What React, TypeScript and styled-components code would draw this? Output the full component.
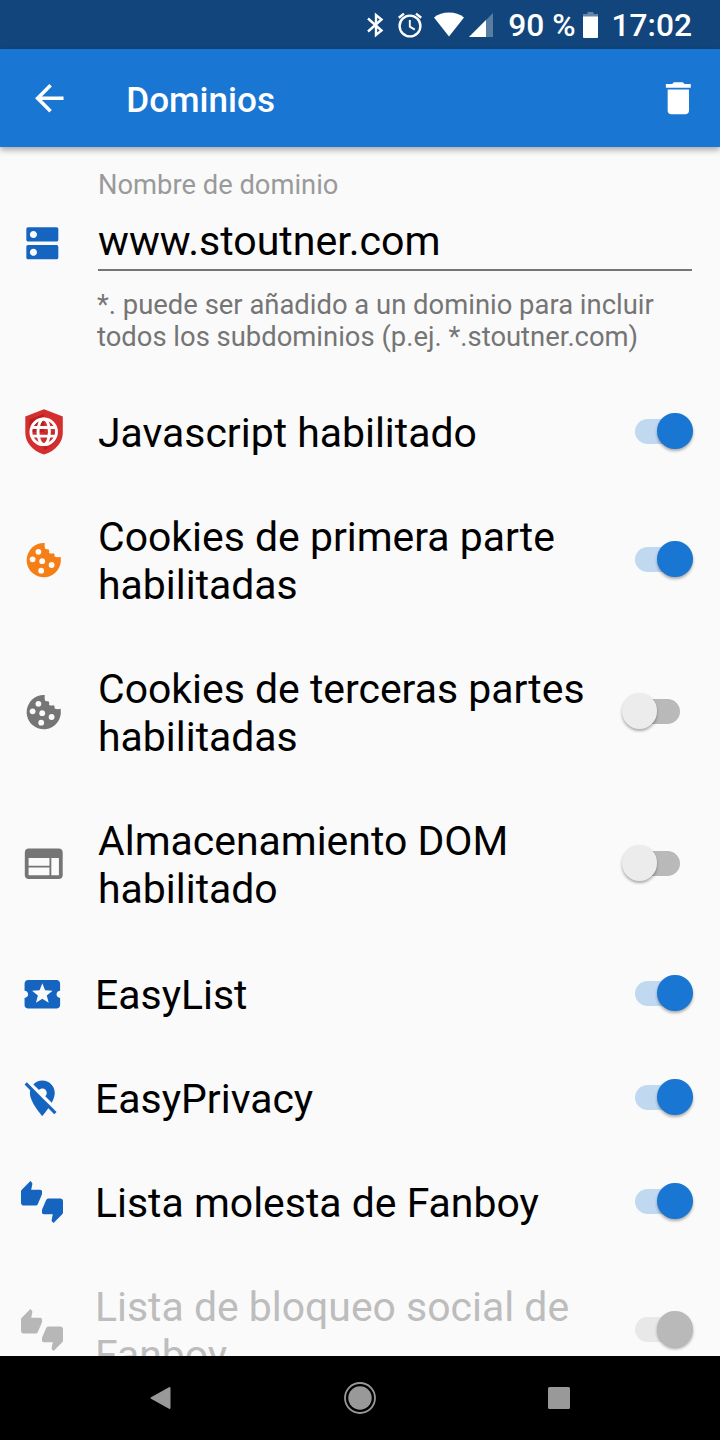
import React from "react";
import styled, { createGlobalStyle } from "styled-components";

const GlobalStyle = createGlobalStyle`
  *, *::before, *::after { box-sizing: border-box; }
  html, body { margin: 0; padding: 0; background: #fafafa; }
  body { font-family: Roboto, "Liberation Sans", sans-serif; overflow: hidden; }
`;

const Screen = styled.div`
  width: 720px;
  height: 1440px;
  display: flex;
  flex-direction: column;
  background: #fafafa;
  overflow: hidden;
`;

const StatusBar = styled.header`
  flex: none;
  height: 49px;
  background: #11457b;
  color: #fff;
  display: flex;
  justify-content: flex-end;
  align-items: center;
  padding-right: 28px;
`;

const StatusText = styled.span<{ $gap: number }>`
  font-size: 31.7px;
  font-weight: 500;
  line-height: 49px;
  white-space: nowrap;
  margin-left: ${(p) => p.$gap}px;
  padding-top: 2px;
`;

const StatusIcon = styled.svg<{ $gap?: number }>`
  display: block;
  flex: none;
  margin-left: ${(p) => p.$gap ?? 0}px;
`;

const AppBar = styled.div`
  flex: none;
  height: 98px;
  background: #1976d2;
  color: #fff;
  display: flex;
  align-items: center;
  padding: 0 20.5px 0 27.6px;
  z-index: 1;
  box-shadow: 0 3px 6px rgba(0, 0, 0, 0.33);
`;

const Title = styled.h1`
  flex: 1;
  margin: 4px 0 0 56px;
  font-size: 35.1px;
  font-weight: 500;
  line-height: 42px;
`;

const IconButton = styled.button`
  display: flex;
  padding: 0;
  border: 0;
  background: none;
  color: inherit;
`;

const Content = styled.main`
  flex: 1;
  min-height: 0;
  overflow: hidden;
`;

const DomainSection = styled.section`
  height: 233px;
  display: flex;
`;

const IconSlot = styled.div`
  flex: none;
  width: 87px;
  display: flex;
  justify-content: center;
  align-items: center;
  margin-right: 11px;
  svg { display: block; }
`;

const DomainIconSlot = styled(IconSlot)`
  width: 84px;
  height: 192px;
  margin-right: 14px;
`;

const DomainFields = styled.div`
  flex: 1;
  padding: 22px 28px 0 0;
`;

const FieldLabel = styled.div`
  font-size: 27.35px;
  line-height: 32px;
  color: #9a9a9a;
`;

const FieldValue = styled.div`
  height: 70px;
  padding-top: 16px;
  font-size: 41.1px;
  line-height: 48px;
  color: #000;
  border-bottom: 2px solid #757575;
`;

const Hint = styled.p`
  margin: 18px 0 0 -1px;
  font-size: 27.42px;
  line-height: 32px;
  color: #757575;
`;

const Group = styled.div`
  margin-bottom: 2px;
`;

const SettingRow = styled.div<{ $tall: boolean }>`
  height: ${(p) => (p.$tall ? 152 : 104)}px;
  display: flex;
  align-items: center;
  padding-right: 27px;
`;

const SettingLabel = styled.span<{ $disabled?: boolean }>`
  flex: 1;
  max-width: 510px;
  margin-top: 2px;
  font-size: 40.93px;
  line-height: 48px;
  color: ${(p) => (p.$disabled ? "#bdbdbd" : "#000")};
`;

const SwitchBox = styled.div`
  flex: none;
  height: 36px;
  margin: -2px 0 0 auto;
  padding-right: 13px;
  display: flex;
  align-items: center;
`;

const Track = styled.div<{ $on: boolean; $disabled?: boolean }>`
  flex: none;
  width: 45px;
  height: 25px;
  border-radius: 13px;
  background: ${(p) => (p.$disabled ? "#e8e8e8" : p.$on ? "#c0d8f0" : "#b9b9b9")};
  display: flex;
  align-items: center;
`;

const Thumb = styled.div<{ $on: boolean; $disabled?: boolean }>`
  flex: none;
  width: 35.6px;
  height: 35.6px;
  margin-left: ${(p) => (p.$on ? 22.4 : -13.4)}px;
  border-radius: 50%;
  background: ${(p) => (p.$disabled ? "#b9b9b9" : p.$on ? "#1976d2" : "#ececec")};
  box-shadow: 0 2px 3px rgba(0, 0, 0, 0.32);
`;

const NavBar = styled.footer`
  flex: none;
  height: 84px;
  background: #000;
  display: flex;
  align-items: center;
  justify-content: space-between;
  padding: 0 150px 0 150px;
`;

const BLUE = "#1565c0";

const Glyph = ({ d, size, color }: { d: string; size: number; color: string }) => (
  <svg width={size} height={size} viewBox="0 0 24 24" fill={color}>
    <path d={d} />
  </svg>
);

const DNS =
  "M20 13H4c-.55 0-1 .45-1 1v6c0 .55.45 1 1 1h16c.55 0 1-.45 1-1v-6c0-.55-.45-1-1-1zM7 19c-1.1 0-2-.9-2-2s.9-2 2-2 2 .9 2 2-.9 2-2 2zM20 3H4c-.55 0-1 .45-1 1v6c0 .55.45 1 1 1h16c.55 0 1-.45 1-1V4c0-.55-.45-1-1-1zM7 9c-1.1 0-2-.9-2-2s.9-2 2-2 2 .9 2 2-.9 2-2 2z";
const TICKET =
  "M20 12c0-1.1.9-2 2-2V6c0-1.1-.9-2-2-2H4c-1.1 0-1.99.9-1.99 2v4c1.1 0 1.99.9 1.99 2s-.89 2-2 2v4c0 1.1.9 2 2 2h16c1.1 0 2-.9 2-2v-4c-1.1 0-2-.9-2-2zm-4.42 4.8L12 14.5l-3.58 2.3 1.08-4.12-3.29-2.69 4.24-.25L12 5.8l1.54 3.95 4.24.25-3.29 2.69 1.09 4.11z";
const LOCATION_OFF =
  "M12 6.5c1.38 0 2.5 1.12 2.5 2.5 0 .74-.33 1.39-.83 1.85l3.63 3.63c.98-1.86 1.7-3.8 1.7-5.48 0-3.87-3.13-7-7-7-1.98 0-3.76.83-5.04 2.15l3.19 3.19c.46-.52 1.11-.84 1.85-.84zm4.37 9.6l-4.63-4.63-.11-.11L3.27 3 2 4.27l3.18 3.18C5.07 7.95 5 8.47 5 9c0 5.25 7 13 7 13s1.67-1.85 3.38-4.35L18.73 21 20 19.73l-3.63-3.63z";
const THUMBS =
  "M12 6c0-.55-.45-1-1-1H5.82l.66-3.18.02-.23c0-.31-.13-.59-.33-.8L5.38 0 .44 4.94C.17 5.21 0 5.59 0 6v6.5c0 .83.67 1.5 1.5 1.5h6.75c.62 0 1.15-.38 1.38-.91l2.26-5.29c.07-.17.11-.36.11-.55V6zm10.5 4h-6.75c-.62 0-1.15.38-1.38.91l-2.26 5.29c-.07.17-.11.36-.11.55V18c0 .55.45 1 1 1h5.18l-.66 3.18-.02.24c0 .31.13.59.33.8l.79.78 4.94-4.94c.27-.27.44-.65.44-1.06v-6.5c0-.83-.67-1.5-1.5-1.5z";
const WEB =
  "M20 4H4c-1.1 0-1.99.9-1.99 2L2 18c0 1.1.9 2 2 2h16c1.1 0 2-.9 2-2V6c0-1.1-.9-2-2-2zm-5 14H4v-4h11v4zm0-5H4V9h11v4zm5 5h-4V9h4v9z";

const Shield = () => (
  <svg width="38" height="46" viewBox="0 0 38 46">
    <path d="M19 .2 37.800 7.500v16.500c0 9-7 18-18.800 21.600C7.200 42 .3 33 .3 24V7.500z" fill="#d32f2f" />
    <path d="M19 5 4.500 10.500V23H19v18c8-3 13.500-9 14.500-18H19z" fill="#b71c1c" opacity=".85" />
    <path d="M19 23h14.500c-1 9-6 14.500-10 16.500L19 37z" fill="#d32f2f" opacity=".6" />
    <g fill="none" stroke="#fff" strokeWidth="2.900">
      <circle cx="18.700" cy="22.800" r="12.800" />
      <ellipse cx="18.700" cy="22.800" rx="5.700" ry="12.800" />
      <path d="M7 18.500h23.400M7 27.100h23.400" />
    </g>
  </svg>
);

const Cookie = ({ color }: { color: string }) => (
  <svg width="35" height="35" viewBox="0 0 35 35">
    <path
      d="M18.800.1A17.100 17.100 0 1 0 34.500 13.800c-2.100.6-4.300.4-6-.3.3-1.600-.1-2.800-.8-3.300-1.600.4-3.200.3-4.700-.3.5-1.600.2-2.900-.7-3.600-1.200.1-2.300-.1-3.300-.8-.4-1.800-.5-3.600-.2-5.400z"
      fill={color}
    />
    <g fill="#fafafa">
      <circle cx="12.400" cy="8.800" r="2.900" />
      <circle cx="6.600" cy="16.300" r="2.900" />
      <circle cx="16.200" cy="18.200" r="2.900" />
      <circle cx="25.600" cy="22" r="2.900" />
      <circle cx="15.200" cy="27.700" r="2.900" />
    </g>
  </svg>
);

type Setting = { label: string; icon: React.ReactNode; on: boolean; tall?: boolean; disabled?: boolean };

const permissions: Setting[] = [
  { label: "Javascript habilitado", icon: <Shield />, on: true },
  { label: "Cookies de primera parte habilitadas", icon: <Cookie color="#f57f17" />, on: true, tall: true },
  { label: "Cookies de terceras partes habilitadas", icon: <Cookie color="#757575" />, on: false, tall: true },
  { label: "Almacenamiento DOM habilitado", icon: <Glyph d={WEB} size={45.5} color="#757575" />, on: false, tall: true },
];

const blocklists: Setting[] = [
  { label: "EasyList", icon: <Glyph d={TICKET} size={42.67} color={BLUE} />, on: true },
  { label: "EasyPrivacy", icon: <Glyph d={LOCATION_OFF} size={42.67} color={BLUE} />, on: true },
  { label: "Lista molesta de Fanboy", icon: <Glyph d={THUMBS} size={42} color={BLUE} />, on: true },
  { label: "Lista de bloqueo social de Fanboy", icon: <Glyph d={THUMBS} size={42} color="#b7b7b7" />, on: true, tall: true, disabled: true },
];

const BlockSlot = styled(IconSlot)`
  width: 84px;
  margin-right: 11px;
`;

const Row = ({ item, Slot }: { item: Setting; Slot: React.ElementType }) => (
  <SettingRow $tall={!!item.tall}>
    <Slot>{item.icon}</Slot>
    <SettingLabel $disabled={item.disabled}>{item.label}</SettingLabel>
    <SwitchBox role="switch" aria-checked={item.on}>
      <Track $on={item.on} $disabled={item.disabled}>
        <Thumb $on={item.on} $disabled={item.disabled} />
      </Track>
    </SwitchBox>
  </SettingRow>
);

export default function App() {
  return (
    <Screen>
      <GlobalStyle />
      <StatusBar>
        <StatusIcon width="17" height="26" viewBox="0 0 17 26" fill="none" stroke="#fff" strokeWidth="2.4">
          <path d="M1 6.500 14.500 18.500 9 23V3L14.500 7.500 1 19.500" />
        </StatusIcon>
        <StatusIcon $gap={14} width="24" height="26" viewBox="0 0 24 26" fill="none" stroke="#fff" strokeWidth="2.4">
          <circle cx="12" cy="14" r="10.400" />
          <path d="M11.800 8v6.600l5 3" strokeWidth="1.900" />
          <path d="M.8 5.800 6 1.600M23.200 5.800 18 1.600" />
        </StatusIcon>
        <StatusIcon $gap={12} width="30" height="25" viewBox="0 0 30 25" fill="#fff">
          <path d="M15 24.500 0 5.600C4 2.200 9.200.5 15 .5S26 2.200 30 5.600z" />
        </StatusIcon>
        <StatusIcon $gap={5} width="24" height="24" viewBox="0 0 24 24" fill="#fff">
          <path d="M0 24 24 0v24z" opacity=".3" />
          <path d="M0 24 17 7v17z" />
        </StatusIcon>
        <StatusText $gap={15}>90 %</StatusText>
        <StatusIcon $gap={7.5} width="15" height="26" viewBox="0 0 15 26" fill="#fff">
          <path d="M4.500 0h6v2H15v3H0V2h4.500z" opacity=".35" />
          <path d="M0 4.500h15V25q0 1-1 1H1q-1 0-1-1z" />
        </StatusIcon>
        <StatusText $gap={13.5}>17:02</StatusText>
      </StatusBar>
      <AppBar>
        <IconButton aria-label="Atrás">
          <Glyph d="M20 11H7.830l5.590-5.590L12 4l-8 8 8 8 1.410-1.410L7.830 13H20v-2z" size={42.67} color="#fff" />
        </IconButton>
        <Title>Dominios</Title>
        <IconButton aria-label="Eliminar">
          <Glyph d="M6 19c0 1.100.9 2 2 2h8c1.100 0 2-.9 2-2V7H6v12zM19 4h-3.500l-1-1h-5l-1 1H5v2h14V4z" size={42.67} color="#fff" />
        </IconButton>
      </AppBar>
      <Content>
        <DomainSection>
          <DomainIconSlot>
            <Glyph d={DNS} size={42.67} color={BLUE} />
          </DomainIconSlot>
          <DomainFields>
            <FieldLabel>Nombre de dominio</FieldLabel>
            <FieldValue>www.stoutner.com</FieldValue>
            <Hint>*. puede ser añadido a un dominio para incluir todos los subdominios (p.ej. *.stoutner.com)</Hint>
          </DomainFields>
        </DomainSection>
        <Group>
          {permissions.map((item) => (
            <Row key={item.label} item={item} Slot={IconSlot} />
          ))}
        </Group>
        {blocklists.map((item) => (
          <Row key={item.label} item={item} Slot={BlockSlot} />
        ))}
      </Content>
      <NavBar>
        <svg width="21" height="24" viewBox="0 0 21 24">
          <path d="M1.500 12 19.500 2v20z" fill="#999" stroke="#999" strokeWidth="2" strokeLinejoin="round" />
        </svg>
        <svg width="32" height="32" viewBox="0 0 32 32">
          <circle cx="16" cy="16" r="15" fill="none" stroke="#999" strokeWidth="1.800" />
          <circle cx="16" cy="16" r="11.700" fill="#999" />
        </svg>
        <svg width="22" height="22" viewBox="0 0 22 22">
          <rect width="22" height="22" rx="1.500" fill="#999" />
        </svg>
      </NavBar>
    </Screen>
  );
}
